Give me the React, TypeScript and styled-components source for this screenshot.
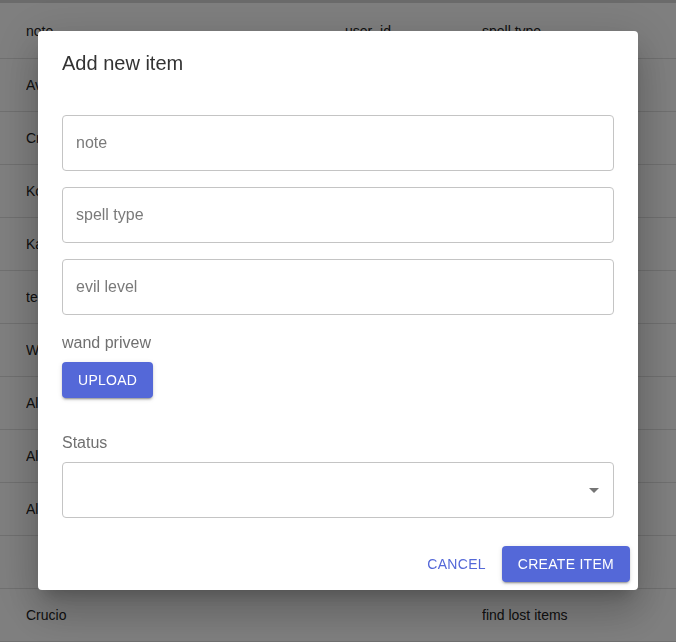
import React from "react";
import styled, { createGlobalStyle } from "styled-components";

const GlobalStyle = createGlobalStyle`
  html, body {
    margin: 0;
    padding: 0;
    background: #ffffff;
    font-family: "Liberation Sans", Arial, Helvetica, sans-serif;
  }
  * { box-sizing: border-box; }
`;

const Page = styled.div`
  width: 100%;
  min-height: 642px;
  border-top: 3px solid #d6d6d6;
`;

const Row = styled.div<{ $header?: boolean }>`
  display: grid;
  grid-template-columns: 319px 137px 1fr;
  align-items: center;
  padding-left: 26px;
  height: ${(p) => (p.$header ? "56px" : "53px")};
  border-bottom: 1px solid #e0e0e0;
  font-size: 14px;
  color: #222222;
`;

const Cell = styled.div`
  white-space: nowrap;
  overflow: hidden;
`;

const Backdrop = styled.div`
  position: fixed;
  inset: 0;
  background: rgba(0, 0, 0, 0.5);
  display: flex;
  align-items: flex-start;
  padding: 31px 0 0 38px;
`;

const Dialog = styled.div`
  width: 600px;
  background: #ffffff;
  border-radius: 4px;
  display: flex;
  flex-direction: column;
  box-shadow: 0px 11px 15px -7px rgba(0, 0, 0, 0.2),
    0px 24px 38px 3px rgba(0, 0, 0, 0.14),
    0px 9px 46px 8px rgba(0, 0, 0, 0.12);
`;

const Title = styled.h2`
  margin: 0;
  padding: 16px 24px;
  font-size: 20px;
  line-height: 32px;
  font-weight: 400;
  color: #333333;
`;

const Content = styled.div`
  padding: 20px 24px 20px;
  display: flex;
  flex-direction: column;
`;

const Input = styled.input`
  height: 56px;
  width: 100%;
  border: 1px solid #c4c4c4;
  border-radius: 4px;
  padding: 0 13px;
  font-family: inherit;
  font-size: 16px;
  color: #333;
  outline: none;
  margin-bottom: 16px;
  &::placeholder {
    color: #7a7a7a;
  }
`;

const FieldLabel = styled.div<{ $gap: number }>`
  margin-top: ${(p) => p.$gap}px;
  font-size: 16px;
  line-height: 24px;
  color: #707070;
  margin-bottom: 7px;
`;

const Button = styled.button<{ $variant?: "contained" | "text" }>`
  height: 36px;
  padding: 0 ${(p) => (p.$variant === "text" ? "8px" : "16px")};
  border: none;
  border-radius: 4px;
  font-family: inherit;
  font-size: 14px;
  font-weight: 400;
  letter-spacing: 0.02em;
  text-transform: uppercase;
  cursor: pointer;
  background: ${(p) => (p.$variant === "text" ? "transparent" : "#5468d8")};
  color: ${(p) => (p.$variant === "text" ? "#5468d8" : "#ffffff")};
  box-shadow: ${(p) =>
    p.$variant === "text"
      ? "none"
      : "0px 3px 1px -2px rgba(0,0,0,0.2), 0px 2px 2px 0px rgba(0,0,0,0.14), 0px 1px 5px 0px rgba(0,0,0,0.12)"};
`;

const UploadRow = styled.div`
  display: flex;
`;

const SelectBox = styled.div`
  height: 56px;
  border: 1px solid #c4c4c4;
  border-radius: 4px;
  display: flex;
  align-items: center;
  justify-content: flex-end;
  padding-right: 7px;
`;

const Actions = styled.div`
  display: flex;
  justify-content: flex-end;
  align-items: center;
  gap: 8px;
  padding: 8px 8px 8px;
`;

const rows: [string, string, string][] = [
  ["Avada Kedavra", "", ""],
  ["Crucio", "", ""],
  ["Konfundo", "", ""],
  ["Kaboom", "", ""],
  ["test", "", ""],
  ["Wingardium", "", ""],
  ["Alohomora", "", ""],
  ["Alarte", "", ""],
  ["Alohomora", "", ""],
  ["", "", ""],
  ["Crucio", "", "find lost items"],
];

export default function App() {
  return (
    <>
      <GlobalStyle />
      <Page>
        <Row $header>
          <Cell>note</Cell>
          <Cell>user_id</Cell>
          <Cell>spell type</Cell>
        </Row>
        {rows.map((r, i) => (
          <Row key={i}>
            <Cell>{r[0]}</Cell>
            <Cell>{r[1]}</Cell>
            <Cell>{r[2]}</Cell>
          </Row>
        ))}
      </Page>
      <Backdrop>
        <Dialog>
          <Title>Add new item</Title>
          <Content>
            <Input placeholder="note" />
            <Input placeholder="spell type" />
            <Input placeholder="evil level" />
            <FieldLabel $gap={0}>wand privew</FieldLabel>
            <UploadRow>
              <Button>Upload</Button>
            </UploadRow>
            <FieldLabel $gap={33}>Status</FieldLabel>
            <SelectBox>
              <svg width="24" height="24" viewBox="0 0 24 24">
                <path d="M7 10l5 5 5-5z" fill="#757575" />
              </svg>
            </SelectBox>
          </Content>
          <Actions>
            <Button $variant="text">Cancel</Button>
            <Button>Create item</Button>
          </Actions>
        </Dialog>
      </Backdrop>
    </>
  );
}
